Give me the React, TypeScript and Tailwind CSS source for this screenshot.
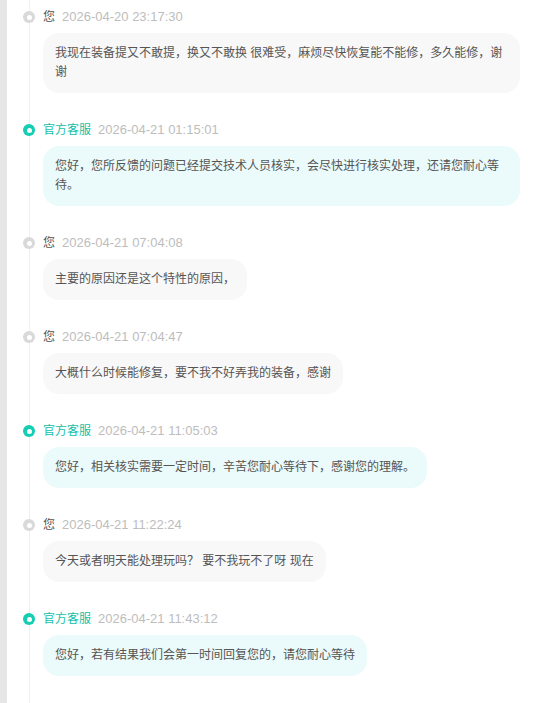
const messages = [
  { from: "user", time: "2026-04-20 23:17:30", text: "我现在装备提又不敢提，换又不敢换 很难受，麻烦尽快恢复能不能修，多久能修，谢谢" },
  { from: "staff", time: "2026-04-21 01:15:01", text: "您好，您所反馈的问题已经提交技术人员核实，会尽快进行核实处理，还请您耐心等待。" },
  { from: "user", time: "2026-04-21 07:04:08", text: "主要的原因还是这个特性的原因，" },
  { from: "user", time: "2026-04-21 07:04:47", text: "大概什么时候能修复，要不我不好弄我的装备，感谢" },
  { from: "staff", time: "2026-04-21 11:05:03", text: "您好，相关核实需要一定时间，辛苦您耐心等待下，感谢您的理解。" },
  { from: "user", time: "2026-04-21 11:22:24", text: "今天或者明天能处理玩吗？ 要不我玩不了呀 现在" },
  { from: "staff", time: "2026-04-21 11:43:12", text: "您好，若有结果我们会第一时间回复您的，请您耐心等待" },
];

const MessageItem = ({ from, time, text }: { from: string; time: string; text: string }) => {
  const staff = from === "staff";
  return (
    <div className="flex flex-col">
      <div className="flex h-4 items-center">
        <span
          className={`-ml-[7px] flex h-[12px] w-[12px] shrink-0 items-center justify-center rounded-full ${
            staff ? "bg-[#14cdb3]" : "bg-[#d9d9d9]"
          }`}
        >
          <span className="h-[5px] w-[5px] rounded-full bg-white" />
        </span>
        <span className={`ml-[8px] text-[12px] ${staff ? "text-[#14c0a8]" : "text-[#555]"}`}>
          {staff ? "官方客服" : "您"}
        </span>
        <span className="ml-[7px] text-[13px] text-[#bdbdbd]">{time}</span>
      </div>
      <div
        className={`ml-[13px] mt-2 w-fit max-w-[477px] rounded-[16px] px-[12px] py-[11px] text-[12px] leading-[19px] text-[#555] ${
          staff ? "bg-[#ebfafa]" : "bg-[#f8f8f8]"
        }`}
      >
        {text}
      </div>
    </div>
  );
};

export default function App() {
  return (
    <div
      className="flex min-h-screen bg-white"
      style={{ fontFamily: '"Liberation Sans", "Noto Sans CJK SC", sans-serif' }}
    >
      <div className="w-[7px] shrink-0 bg-[#e6e6e6]" />
      <div className="flex-1">
        <div className="ml-[22px] flex flex-col gap-[29px] border-l border-[#efefef] pb-10 pt-[9px]">
          {messages.map((m, idx) => (
            <MessageItem key={idx} from={m.from} time={m.time} text={m.text} />
          ))}
        </div>
      </div>
    </div>
  );
}
